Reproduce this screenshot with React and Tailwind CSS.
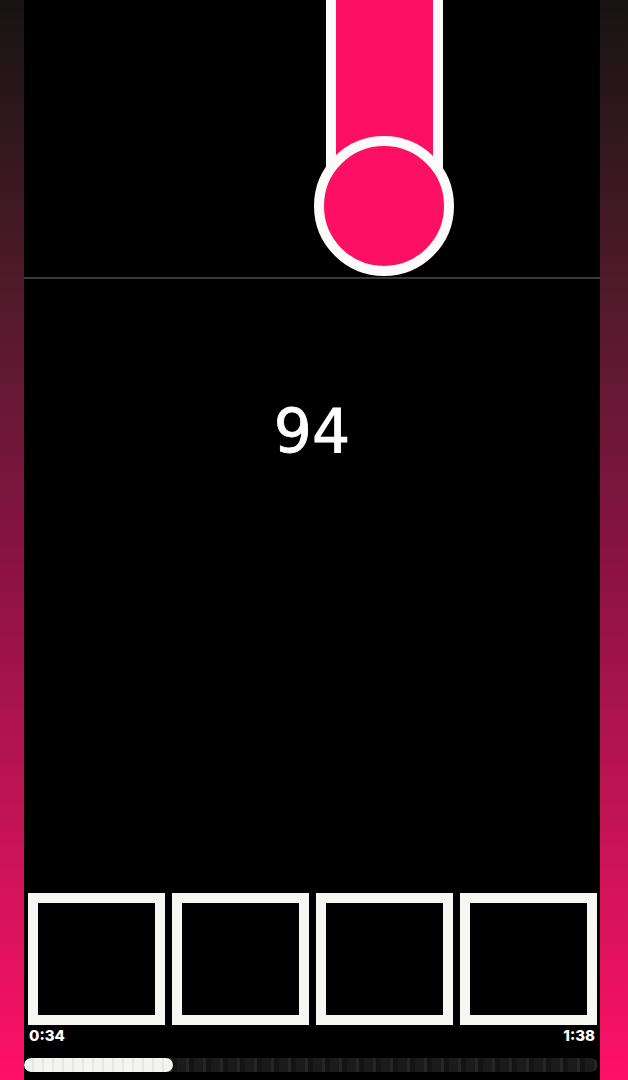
import React from "react";

const PINK = "bg-[#fd1064]";

const Tile = () => (
  <div className="ml-[290px] flex w-[140px] flex-col items-center">
    <div className={`h-[170px] w-[117px] border-x-[10px] border-[#fbfbf9] ${PINK}`} />
    <div className={`-mt-[34px] h-[140px] w-[140px] rounded-full border-[10px] border-[#fbfbf9] ${PINK}`} />
  </div>
);

const Pad = () => (
  <div className="h-[132px] w-[137px] border-[10px] border-[#f6f6f3] bg-black" />
);

const App = () => {
  const elapsed = "0:34";
  const total = "1:38";

  return (
    <div className="flex h-[1080px] w-[628px] overflow-hidden bg-black">
      <div className="w-[24px] bg-gradient-to-b from-[#171313] via-[#861241] to-[#ff1067]" />

      <main className="flex w-[576px] flex-col bg-black">
        {/* falling lane */}
        <section className="h-[277px] overflow-hidden">
          <Tile />
        </section>
        <div className="h-[2px] bg-[#3a3a3a]" />

        <div className="flex flex-1 justify-center pt-[122px]">
          <span className="font-['DejaVu_Sans','Liberation_Sans',sans-serif] text-[60px] font-normal leading-none text-white [-webkit-text-stroke:0.8px_white]">
            94
          </span>
        </div>

        {/* pads */}
        <div className="flex gap-[7px] pl-[4px]">
          <Pad />
          <Pad />
          <Pad />
          <Pad />
        </div>

        <div className="flex h-[20px] justify-between pl-[5px] pr-[5px] pt-[2px] font-['Inter',sans-serif] text-[15px] font-extrabold leading-[18px] text-white">
          <span>{elapsed}</span>
          <span>{total}</span>
        </div>

        <div className="mr-[2px] mt-[13px] mb-[8px] h-[14px] overflow-hidden rounded-full bg-[repeating-linear-gradient(90deg,#1b1b1b_0px,#1b1b1b_9px,#262626_9px,#262626_12px,#141414_12px,#141414_17px)]">
          <div className="h-full w-[149px] rounded-full bg-[repeating-linear-gradient(90deg,#f4f4f2_0px,#f4f4f2_8px,#e6e6e4_8px,#e6e6e4_10px)]" />
        </div>
      </main>

      <div className="w-[28px] bg-gradient-to-b from-[#171313] via-[#861241] to-[#ff1067]" />
    </div>
  );
};

export default App;
